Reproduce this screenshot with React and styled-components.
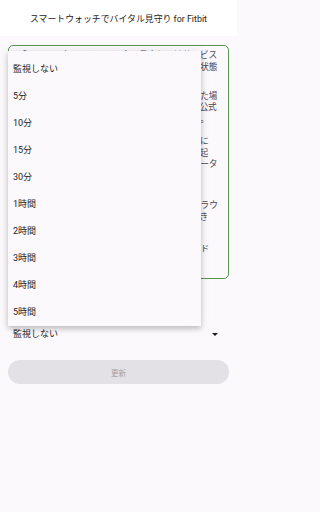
import React from 'react';
import styled, { createGlobalStyle } from 'styled-components';

const intervals = ['監視しない', '5分', '10分', '15分', '30分', '1時間', '2時間', '3時間', '4時間', '5時間'];

const paragraphs = [
  {
    gap: 0,
    lines: [
      '「スマートウォッチでバイタル見守り」はサービス',
      '利用者のスマートウォッチから心拍数等の健康状態',
      'を取得し、見守りを行うサービスです。',
    ],
  },
  {
    gap: 6,
    lines: [
      '見守り対象者のスマートウォッチに異常があった場',
      '合は通知でお知らせします。詳しくはアプリの公式',
      'ウェブサイトのヘルプページをご確認ください。',
    ],
  },
  {
    gap: 11,
    lines: [
      '計測されたバイタルデータは設定間隔で定期的に',
      'サーバーへ送信されます。異常時はアプリ上に起',
      '動時通知が表示され、過去の推移やバイタルデータ',
      'も確認できます。',
    ],
  },
  {
    gap: 18,
    lines: [
      '取得したデータはクラウドに安全に保存されブラウ',
      'ザからも閲覧可能です。管理者は一覧を確認でき',
      'ます。',
    ],
  },
  {
    gap: 9,
    lines: [
      'ログインには登録済メールアドレスとパスワード',
      'が必要です。',
    ],
  },
];

const App = () => {
  return (
    <>
      <GlobalStyle />
      <Page>
        <Header>スマートウォッチでバイタル見守り for Fitbit</Header>
        <Main>
          <Card>
            {paragraphs.map((p, i) => (
              <Paragraph key={i} $gap={p.gap}>
                {p.lines.map((line, j) => (
                  <React.Fragment key={j}>
                    {line}
                    {j < p.lines.length - 1 && <br />}
                  </React.Fragment>
                ))}
              </Paragraph>
            ))}
          </Card>
          <SelectField>
            <SelectValue>監視しない</SelectValue>
            <Arrow />
          </SelectField>
          <UpdateButton disabled>更新</UpdateButton>
        </Main>
        <Menu>
          {intervals.map((label) => (
            <MenuItem key={label}>{label}</MenuItem>
          ))}
        </Menu>
      </Page>
    </>
  );
};

export default App;

const GlobalStyle = createGlobalStyle`
  html, body {
    margin: 0;
    padding: 0;
    background: #fcf9fc;
  }
  * {
    box-sizing: border-box;
  }
`;

const Page = styled.div`
  position: relative;
  width: 237px;
  height: 512px;
  background: #fcf9fc;
  font-family: Roboto, "Noto Sans CJK JP", sans-serif;
  color: #1d1b20;
  overflow: hidden;
`;

const Header = styled.div`
  height: 36px;
  display: flex;
  align-items: center;
  justify-content: center;
  background: #ffffff;
  font-size: 8.9px;
  color: #1d1b20;
`;

const Main = styled.div`
  padding: 9px 8px 0;
  display: flex;
  flex-direction: column;
`;

const Card = styled.div`
  border: 1px solid #5a9654;
  border-radius: 5px;
  padding: 4px 8px 3px 9px;
  height: 234px;
  color: #49454f;
`;

const Paragraph = styled.p`
  margin: ${(p) => p.$gap}px 0 0;
  font-size: 8.7px;
  line-height: 11.5px;
  white-space: nowrap;
`;

const SelectField = styled.div`
  margin-top: 45px;
  height: 20px;
  display: flex;
  align-items: center;
  justify-content: space-between;
  padding: 0 11px 0 5px;
`;

const SelectValue = styled.span`
  font-size: 9px;
  line-height: 12px;
  color: #1d1b20;
`;

const Arrow = styled.span`
  width: 0;
  height: 0;
  border-left: 3px solid transparent;
  border-right: 3px solid transparent;
  border-top: 3px solid #1d1b20;
`;

const UpdateButton = styled.button`
  margin-top: 16px;
  height: 24px;
  border: none;
  border-radius: 12px;
  background: #e3e1e5;
  color: #a3a0a6;
  font-family: Roboto, "Noto Sans CJK JP", sans-serif;
  font-size: 7.5px;
  padding: 0;
`;

const Menu = styled.div`
  position: absolute;
  top: 51px;
  left: 8px;
  width: 193px;
  padding: 4px 0 1px;
  background: #fcf9fd;
  box-shadow: 0 3px 5px rgba(0, 0, 0, 0.18), 0 1px 10px rgba(0, 0, 0, 0.1);
`;

const MenuItem = styled.div`
  height: 27px;
  display: flex;
  align-items: center;
  padding-left: 5px;
  font-size: 9px;
  color: #1d1b20;
`;
